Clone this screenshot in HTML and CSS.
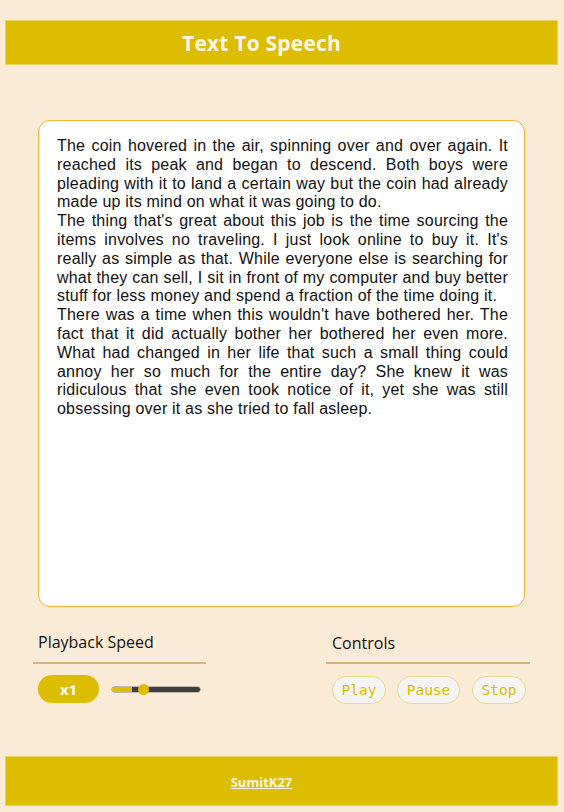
FILE: index.html
```html
<!DOCTYPE html>
<html lang="en">
<head>
<meta charset="utf-8">
<title>Text To Speech</title>
<link rel="stylesheet" href="styles.css">
</head>
<body>
<header class="topbar"><h1 class="title">Text To Speech</h1></header>
<main class="main">
<textarea class="reader" spellcheck="false">The coin hovered in the air, spinning over and over again. It reached its peak and began to descend. Both boys were pleading with it to land a certain way but the coin had already made up its mind on what it was going to do.
The thing that's great about this job is the time sourcing the items involves no traveling. I just look online to buy it. It's really as simple as that. While everyone else is searching for what they can sell, I sit in front of my computer and buy better stuff for less money and spend a fraction of the time doing it.
There was a time when this wouldn't have bothered her. The fact that it did actually bother her bothered her even more. What had changed in her life that such a small thing could annoy her so much for the entire day? She knew it was ridiculous that she even took notice of it, yet she was still obsessing over it as she tried to fall asleep.</textarea>
<section class="panel">
  <div class="col col-speed">
    <h2 class="col-title">Playback Speed</h2>
    <div class="row">
      <span class="pill">x1</span>
      <input class="slider" type="range" min="0.5" max="2" step="0.1" value="1">
    </div>
  </div>
  <div class="col col-controls">
    <h2 class="col-title">Controls</h2>
    <div class="row btns">
      <button class="btn btn-play">Play</button>
      <button class="btn btn-pause">Pause</button>
      <button class="btn btn-stop">Stop</button>
    </div>
  </div>
</section>
</main>
<footer class="footbar"><a class="credit" href="#">SumitK27</a></footer>
</body>
</html>
```
FILE: styles.css
```css
html, body { margin: 0; padding: 0; }
body {
  background: #faebd7;
  font-family: "Comic Sans MS", "Open Sans", sans-serif;
  padding: 20px 6px 6px 5px;
  height: 812px;
  box-sizing: border-box;
  display: flex;
  flex-direction: column;
}
.topbar {
  height: 45px;
  box-sizing: border-box;
  background: #dcbd00;
  border: 1px solid #ead15a;
  display: flex;
  align-items: center;
  justify-content: center;
  padding-right: 40px;
}
.title {
  margin: 0;
  color: #fbf6e9;
  font-size: 21px;
  font-weight: 700;
  letter-spacing: 0.2px;
}
.main {
  flex: 1;
  display: flex;
  flex-direction: column;
  align-items: center;
  padding-top: 55px;
}
.reader {
  width: 487px;
  height: 487px;
  box-sizing: border-box;
  margin: 0;
  padding: 16px 16px 16px 18px;
  border: 1.5px solid #f7b035;
  border-radius: 12px;
  background: #fff;
  color: #111;
  font-family: "Liberation Sans", Arial, sans-serif;
  font-size: 16px;
  letter-spacing: 0.2px;
  line-height: 18.8px;
  text-align: justify;
  resize: none;
  outline: none;
  overflow: hidden;
}
.panel {
  width: 497px;
  margin: 24px 0 0 0;
  display: grid;
  grid-template-columns: 173px 204px;
  column-gap: 120px;
}
.col-title {
  margin: 0;
  padding: 0 0 9px 5px;
  font-size: 16px;
  font-weight: 400;
  color: #111;
  border-bottom: 2px solid #dab37a;
  line-height: 22px;
}
.col-controls .col-title { padding-left: 6px; padding-top: 1px; padding-bottom: 8px; }
.row {
  display: flex;
  align-items: center;
  padding: 11px 0 0 5px;
}
.pill {
  width: 61px;
  height: 28px;
  border-radius: 14px;
  background: #dcbd00;
  color: #fff;
  font-weight: 700;
  font-size: 15px;
  display: flex;
  align-items: center;
  justify-content: center;
}
.slider {
  -webkit-appearance: none;
  appearance: none;
  width: 88px;
  height: 11px;
  margin: 0 0 0 13px;
  padding: 0;
  background: transparent;
}
.slider::-webkit-slider-runnable-track {
  height: 5px;
  border-radius: 3px;
  background: linear-gradient(to right, #dcbd00 0 20px, #3e3e3e 20px);
  box-shadow: 0 0 0 0.5px #8a8a8a;
}
.slider::-webkit-slider-thumb {
  -webkit-appearance: none;
  width: 11px;
  height: 11px;
  border-radius: 50%;
  background: #dcbd00;
  margin-top: -3px;
  border: none;
}
.btns { padding-left: 6px; gap: 11px; padding-top: 12px; }
.btn {
  height: 28px;
  box-sizing: border-box;
  border: 1px solid #ecd98c;
  border-radius: 14px;
  background: #f4f4f4;
  color: #dcbd00;
  font-family: "DejaVu Sans Mono", "Liberation Mono", monospace;
  font-size: 14.5px;
  font-weight: 400;
  padding: 0;
  display: flex;
  align-items: center;
  justify-content: center;
}
.btn-play { width: 54px; }
.btn-pause { width: 63px; margin-right: 1px; }
.btn-stop { width: 54px; }
.footbar {
  height: 50px;
  box-sizing: border-box;
  background: #dcbd00;
  border: 1px solid #ead15a;
  display: flex;
  align-items: center;
  justify-content: center;
  padding-right: 40px;
}
.credit {
  color: #fbf6e9;
  font-weight: 700;
  font-size: 13px;
  text-decoration: underline;
  padding-top: 2px;
}
```
